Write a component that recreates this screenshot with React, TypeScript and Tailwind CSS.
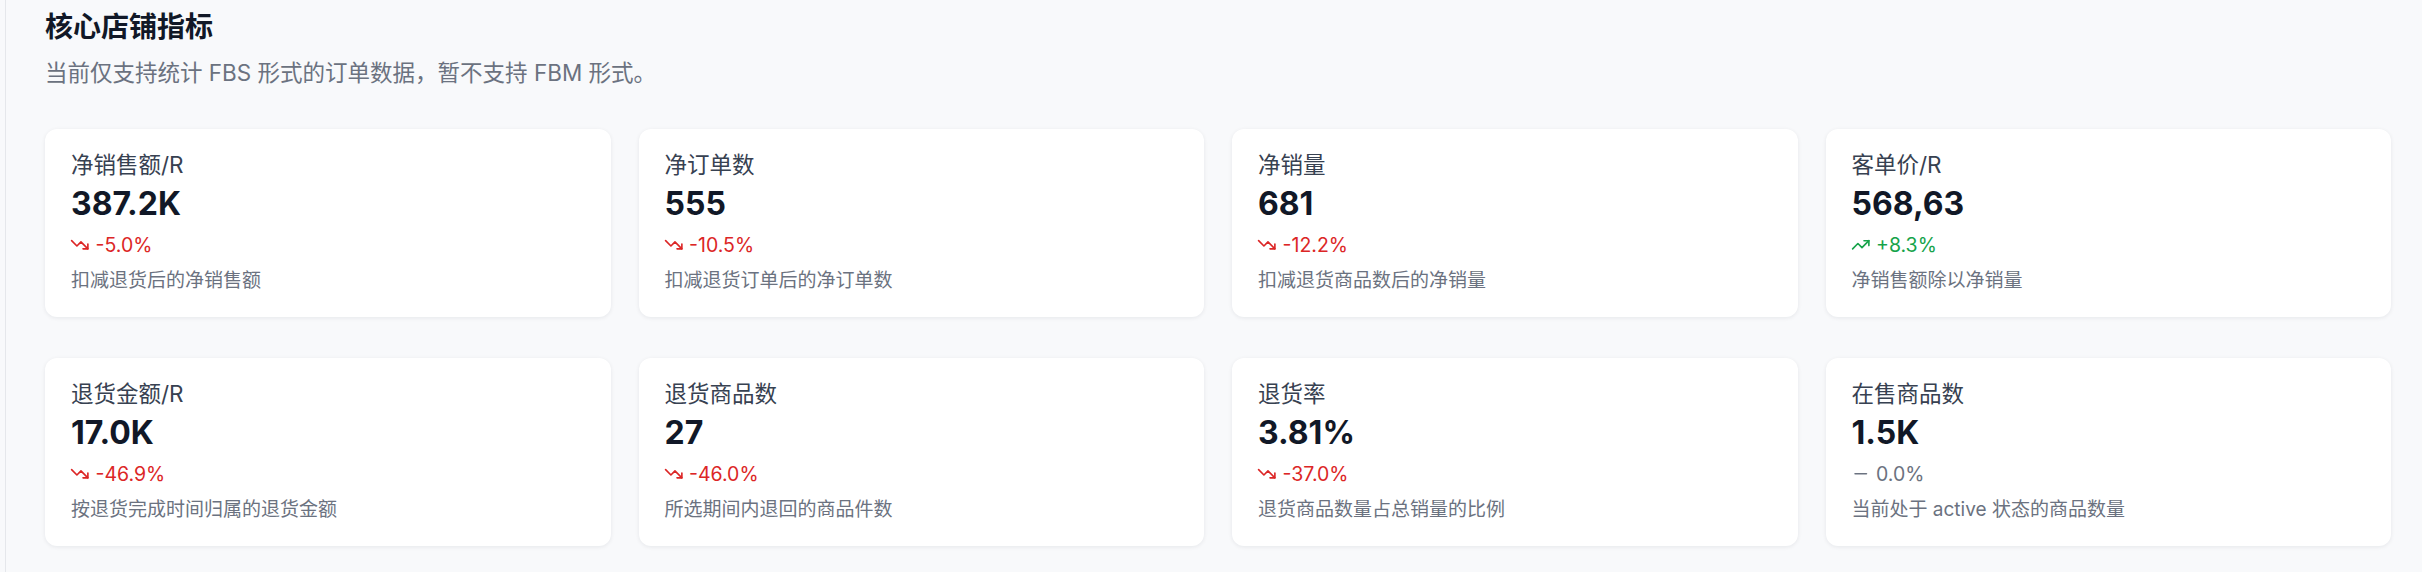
import { Minus, TrendingDown, TrendingUp } from "lucide-react";

type Trend = "up" | "down" | "flat";

type Metric = {
  label: string;
  value: string;
  change: string;
  trend: Trend;
  note: string;
};

const metrics: Metric[] = [
  { label: "净销售额/R", value: "387.2K", change: "-5.0%", trend: "down", note: "扣减退货后的净销售额" },
  { label: "净订单数", value: "555", change: "-10.5%", trend: "down", note: "扣减退货订单后的净订单数" },
  { label: "净销量", value: "681", change: "-12.2%", trend: "down", note: "扣减退货商品数后的净销量" },
  { label: "客单价/R", value: "568,63", change: "+8.3%", trend: "up", note: "净销售额除以净销量" },
  { label: "退货金额/R", value: "17.0K", change: "-46.9%", trend: "down", note: "按退货完成时间归属的退货金额" },
  { label: "退货商品数", value: "27", change: "-46.0%", trend: "down", note: "所选期间内退回的商品件数" },
  { label: "退货率", value: "3.81%", change: "-37.0%", trend: "down", note: "退货商品数量占总销量的比例" },
  { label: "在售商品数", value: "1.5K", change: "0.0%", trend: "flat", note: "当前处于 active 状态的商品数量" },
];

function MetricCard({ m }: { m: Metric }) {
  const color =
    m.trend === "up"
      ? "text-[#16a34a]"
      : m.trend === "down"
        ? "text-[#dc2626]"
        : "text-[#6b7280]";
  const Icon = m.trend === "up" ? TrendingUp : m.trend === "down" ? TrendingDown : Minus;

  return (
    <div className="rounded-xl bg-white pl-[26px] pr-6 pt-5 pb-[21px] shadow-[0_1px_4px_rgba(15,23,42,0.08)]">
      <div className="text-[22.5px] leading-[32px] text-[#374151]">{m.label}</div>
      <div className="mt-[3px] text-[32px] font-bold leading-[40px] text-[#111827]">{m.value}</div>
      <div className={`mt-[6px] flex items-center gap-[6px] text-[19.5px] leading-[30px] ${color}`}>
        <Icon className="-ml-px h-[19.5px] w-[19.5px] shrink-0" strokeWidth={2} />
        <span>{m.change}</span>
      </div>
      <div className="mt-[6px] text-[19px] leading-[30px] text-[#6b7280]">{m.note}</div>
    </div>
  );
}

export default function App() {
  return (
    <div
      className="min-h-[572px] bg-[#f8f9fb] pl-[5px]"
      style={{ fontFamily: 'Inter, "Noto Sans CJK SC", sans-serif' }}
    >
      <div className="min-h-[572px] border-l border-[#e5e7eb] pl-[39px] pr-[31px] pt-[9px] pb-6">
        {/* Header */}
        <h2 className="text-[28px] font-bold leading-[36px] text-[#111827]">核心店铺指标</h2>
        <p className="mt-[11px] text-[22.5px] leading-[33px] text-[#6b7280]">
          当前仅支持统计 FBS 形式的订单数据，暂不支持 FBM 形式。
        </p>

        {/* Metric cards */}
        <div className="mt-[40px] grid grid-cols-4 gap-x-[28px] gap-y-[41px]">
          {metrics.map((m) => (
            <MetricCard key={m.label} m={m} />
          ))}
        </div>
      </div>
    </div>
  );
}
